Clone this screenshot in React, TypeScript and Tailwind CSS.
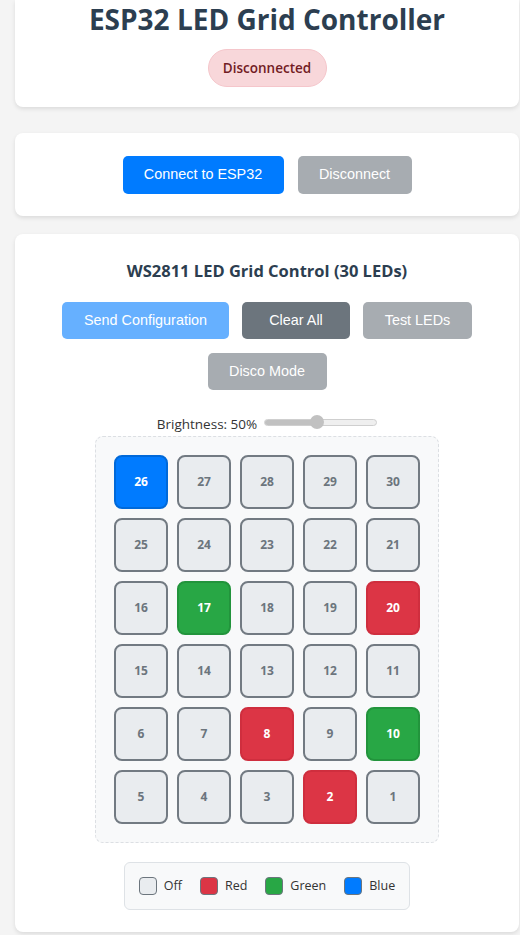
import React from "react";

type C = "off" | "red" | "green" | "blue";

const rows: number[][] = [
  [26, 27, 28, 29, 30],
  [25, 24, 23, 22, 21],
  [16, 17, 18, 19, 20],
  [15, 14, 13, 12, 11],
  [6, 7, 8, 9, 10],
  [5, 4, 3, 2, 1],
];

const colors: Record<number, C> = { 26: "blue", 17: "green", 20: "red", 8: "red", 10: "green", 2: "red" };

const ledCls: Record<C, string> = {
  off: "bg-[#e9ecef] border-[#727a82] text-[#6c757d]",
  red: "bg-[#dc3545] border-[#cf2e3e] text-white",
  green: "bg-[#28a745] border-[#22943c] text-white",
  blue: "bg-[#007bff] border-[#0069d9] text-white",
};

const seg = { fontFamily: '"Open Sans", "Noto Sans", sans-serif' };
const arial = { fontFamily: '"Liberation Sans", Arial, sans-serif' };

function Btn({ w, h, cls, children }: { w: string; h: string; cls: string; children: React.ReactNode }) {
  return (
    <button
      className={`${w} ${h} ${cls} rounded-[5px] text-white text-[14.4px] flex items-center justify-center`}
      style={arial}
    >
      {children}
    </button>
  );
}

export default function App() {
  return (
    <div className="min-h-[935px] bg-[#f4f4f4] pl-[15px] pr-px overflow-hidden text-[#333]" style={seg}>
      <div className="bg-white rounded-b-lg shadow-[0_2px_4px_rgba(0,0,0,0.1)] flex flex-col items-center pb-[20px]">
        <h1 className="text-[28px] leading-[38px] font-bold text-[#2c3e50]">ESP32 LED Grid Controller</h1>
        <div className="mt-[11px] h-[38px] w-[119px] rounded-full bg-[#f8d7da] border border-[#f5c6cb] text-[#721c24] text-[13.5px] font-semibold flex items-center justify-center">
          Disconnected
        </div>
      </div>

      <div className="mt-[26px] bg-white rounded-lg shadow-[0_2px_4px_rgba(0,0,0,0.1)] flex justify-center gap-[14px] pt-[23px] pb-[22px]">
        <Btn w="w-[161px]" h="h-[38px]" cls="bg-[#007bff]">Connect to ESP32</Btn>
        <Btn w="w-[114px]" h="h-[38px]" cls="bg-[#a7acb1]">Disconnect</Btn>
      </div>

      <div className="mt-[18px] bg-white rounded-lg shadow-[0_2px_4px_rgba(0,0,0,0.1)] flex flex-col items-center pt-[24px] pb-[22px]">
        <h3 className="text-[16.5px] leading-[25px] font-bold text-[#2c3e50]">WS2811 LED Grid Control (30 LEDs)</h3>
        <div className="mt-[19px] flex gap-[13px]">
          <Btn w="w-[167px]" h="h-[37px]" cls="bg-[#66b0ff]">Send Configuration</Btn>
          <Btn w="w-[108px]" h="h-[37px]" cls="bg-[#6c757d]">Clear All</Btn>
          <Btn w="w-[109px]" h="h-[37px]" cls="bg-[#a7acb1]">Test LEDs</Btn>
        </div>
        <div className="mt-[14px]">
          <Btn w="w-[119px]" h="h-[37px]" cls="bg-[#a7acb1]">Disco Mode</Btn>
        </div>
        <div className="mt-[22px] h-[20px] flex items-center gap-[7px]">
          <span className="text-[13.5px] leading-[20px] translate-y-[2px]">Brightness: 50%</span>
          <div className="relative w-[113px] h-[14px] flex items-center">
            <div className="w-full h-[7px] rounded-full bg-[#efefef] border border-[#cfcfcf] overflow-hidden">
              <div className="w-[53px] h-full bg-[#c1c1c1]" />
            </div>
            <div className="absolute left-[46px] top-0 w-[14px] h-[14px] rounded-full bg-[#c1c1c1]" />
          </div>
        </div>
        <div className="mt-[4px] bg-[#f8f9fa] border border-dashed border-[#dcdfe3] rounded-lg p-[18px] grid grid-cols-5 gap-[9px]">
          {rows.flat().map((n) => {
            const c = colors[n] ?? "off";
            return (
              <div
                key={n}
                className={`w-[54px] h-[54px] rounded-lg border-2 ${ledCls[c]} flex items-center justify-center text-[12px] font-bold`}
              >
                {n}
              </div>
            );
          })}
        </div>
        <div className="mt-[19px] bg-[#f8f9fa] border border-[#dee2e6] rounded-md px-[14px] py-[14px] flex items-center gap-[18px] text-[12.5px]">
          {[
            ["Off", "bg-[#e9ecef]"],
            ["Red", "bg-[#dc3545]"],
            ["Green", "bg-[#28a745]"],
            ["Blue", "bg-[#007bff]"],
          ].map(([l, b]) => (
            <div key={l} className="flex items-center gap-[7px]">
              <div className={`w-[18px] h-[18px] rounded-[4px] border border-[#6c757d] ${b}`} />
              <span className="leading-[18px]">{l}</span>
            </div>
          ))}
        </div>
      </div>
    </div>
  );
}
